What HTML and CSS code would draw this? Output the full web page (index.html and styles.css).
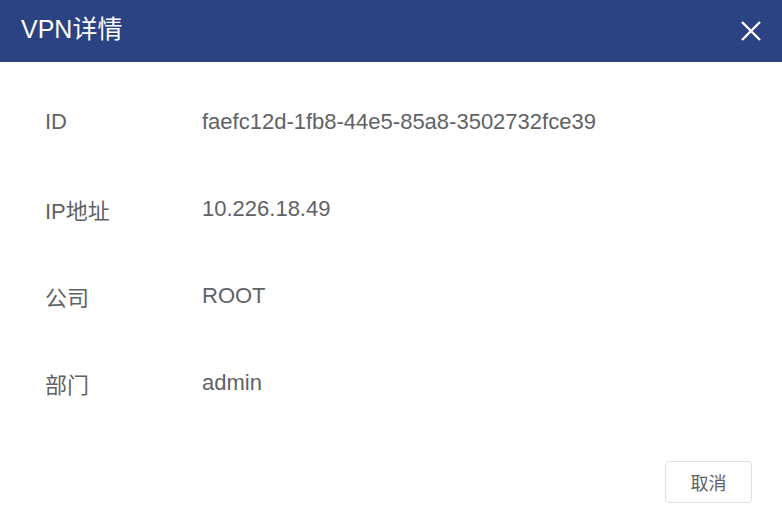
FILE: index.html
```html
<!DOCTYPE html>
<html lang="zh-CN">
<head>
<meta charset="utf-8">
<title>VPN详情</title>
<link rel="stylesheet" href="styles.css">
</head>
<body>
<div class="dialog">
  <div class="header">
    <span class="title">VPN详情</span>
    <button class="close" aria-label="关闭">
      <svg width="20" height="20" viewBox="0 0 20 20"><path d="M1 1L19 19M19 1L1 19" stroke="#fff" stroke-width="2.4" stroke-linecap="butt" fill="none"/></svg>
    </button>
  </div>
  <div class="body">
    <div class="row"><span class="label">ID</span><span class="value">faefc12d-1fb8-44e5-85a8-3502732fce39</span></div>
    <div class="row"><span class="label">IP地址</span><span class="value">10.226.18.49</span></div>
    <div class="row"><span class="label">公司</span><span class="value">ROOT</span></div>
    <div class="row"><span class="label">部门</span><span class="value">admin</span></div>
  </div>
  <div class="footer">
    <button class="btn">取消</button>
  </div>
</div>
</body>
</html>
```
FILE: styles.css
```css
* { box-sizing: border-box; }
html, body { margin: 0; padding: 0; background: #fff; }
body {
  font-family: "Liberation Sans", "Noto Sans CJK SC", sans-serif;
  width: 782px;
  height: 532px;
  overflow: hidden;
}
.dialog { display: flex; flex-direction: column; height: 532px; }
.header {
  height: 62px;
  background: #2b4283;
  display: flex;
  align-items: center;
  justify-content: space-between;
  padding: 0 21px 0 21px;
}
.title {
  color: #fff;
  font-size: 25px;
  line-height: 30px;
  margin-top: -4px;
}
.close {
  background: none;
  border: 0;
  padding: 0;
  width: 20px;
  height: 20px;
  display: flex;
  cursor: pointer;
}
.body {
  padding: 16px 0 0 45px;
  display: flex;
  flex-direction: column;
}
.row {
  height: 87px;
  display: flex;
  align-items: center;
  font-size: 22px;
  color: #606266;
}
.label { width: 157px; }
.footer {
  display: flex;
  justify-content: flex-end;
  padding: 35px 30px 0 0;
}
.btn {
  width: 87px;
  height: 42px;
  border: 1px solid #dcdfe6;
  border-radius: 4px;
  background: #fff;
  color: #606266;
  font-family: "Liberation Sans", "Noto Sans CJK SC", sans-serif;
  font-size: 18px;
  padding: 0;
}
```
